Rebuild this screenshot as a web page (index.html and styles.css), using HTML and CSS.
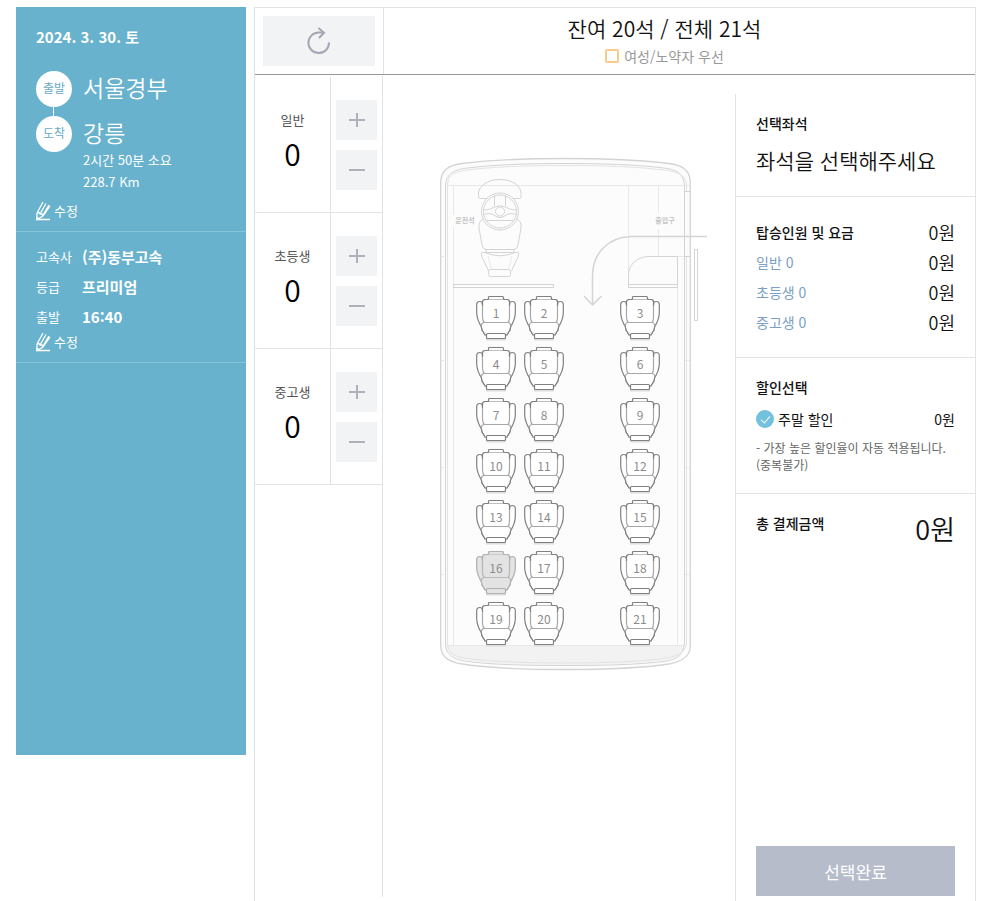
FILE: index.html
```
<!DOCTYPE html>
<html lang="ko">
<head>
  <meta charset="utf-8">
  <meta name="viewport" content="width=device-width, initial-scale=1">
  <title>좌석 선택</title>
  <link rel="stylesheet" href="styles.css">
</head>
<body>

  <!-- shared icons -->
  <svg class="defs" width="0" height="0" aria-hidden="true">
    <symbol id="seat" viewBox="0 0 40 46">
      <path class="seat-shadow" d="M10 44.500H30"/>
      <path class="seat-arm" d="M6.500 9Q6 6.500 4 6.500Q.7 6.500 .7 9.500V18C1 24 3 28 5.500 32L8 27.500H32L34.500 32C37 28 39 24 39.300 18V9.500Q39.300 6.500 36 6.500Q34 6.500 33.500 9Z"/>
      <path class="seat-back" d="M9.500 4.500H31Q33.500 4.500 33.500 7V22Q33.500 26 32 27.500H8.500Q6.500 26 6.500 22V7Q6.500 4.500 9.500 4.500Z"/>
      <path class="seat-line" d="M6.500 11V7Q6.500 4.500 9.500 4.500H31Q33.500 4.500 33.500 7V11"/>
      <path class="seat-line" d="M12.500 4.500V2.500Q12.500 1.500 13.500 1.500H26.500Q27.500 1.500 27.500 2.500V4.500"/>
      <path class="seat-back" d="M8 27.500H32Q35 28 34.700 31.500L34 35L31 40H9L6 35L5.300 31.500Q5 28 8 27.500Z"/>
      <path class="seat-edge" d="M5.300 31.500L6 35L9.500 40.500M34.700 31.500L34 35L30.500 40.500"/>
      <rect class="seat-line" x="10.500" y="38.500" width="19" height="5" rx="1"/>
    </symbol>
    <symbol id="pencil" viewBox="0 0 16 20">
      <path d="M1 12L7 1M4 13L10 2.500M7 14L13 4M1 12L.8 18.500L7 15L14 5M1 12L3 11.500L4 13L6 13L7 15M.8 18.500H14" fill="none" stroke="#fff" stroke-width="1.300"/>
      <path d="M.8 15.500L3 17L.8 19Z" fill="#fff"/>
    </symbol>
  </svg>

  <div class="wrap">

    <aside class="trip">
      <section class="trip-route">
        <p class="date">2024. 3. 30. 토</p>
        <dl class="route">
          <dt>출발</dt>
          <dd>서울경부</dd>
          <dt class="to">도착</dt>
          <dd>강릉</dd>
        </dl>
        <p class="route-info">2시간 50분 소요<br>228.7 Km</p>
        <a class="edit" href="#"><svg width="16" height="20" aria-hidden="true"><use href="#pencil"/></svg>수정</a>
      </section>
      <section class="trip-bus">
        <dl class="bus-info">
          <dt>고속사</dt>
          <dd>(주)동부고속</dd>
          <dt>등급</dt>
          <dd>프리미엄</dd>
          <dt>출발</dt>
          <dd>16:40</dd>
        </dl>
        <a class="edit" href="#"><svg width="16" height="20" aria-hidden="true"><use href="#pencil"/></svg>수정</a>
      </section>
    </aside>

    <main class="booking">
      <header class="booking-head">
        <div class="reset-cell">
          <button class="reset" type="button" aria-label="초기화">
            <svg width="24" height="28" viewBox="0 0 24 28" fill="none" stroke="#a3a8b4" stroke-width="2" aria-hidden="true">
              <path d="M22 15.500A10.300 10.300 0 1 1 12 5.500H16.500"/>
              <path d="M11.500 1L17 5.800L12 11"/>
            </svg>
          </button>
        </div>
        <div class="seat-count">
          <h1>잔여 20석 / 전체 21석</h1>
          <p class="legend"><span class="box"></span>여성/노약자 우선</p>
        </div>
      </header>

      <div class="booking-body">

        <div class="people">
          <div class="person">
            <div class="person-count"><span>일반</span><output>0</output></div>
            <div class="person-btns">
              <button class="plus" type="button" aria-label="일반 추가"></button>
              <button class="minus" type="button" aria-label="일반 빼기"></button>
            </div>
          </div>
          <div class="person">
            <div class="person-count"><span>초등생</span><output>0</output></div>
            <div class="person-btns">
              <button class="plus" type="button" aria-label="초등생 추가"></button>
              <button class="minus" type="button" aria-label="초등생 빼기"></button>
            </div>
          </div>
          <div class="person">
            <div class="person-count"><span>중고생</span><output>0</output></div>
            <div class="person-btns">
              <button class="plus" type="button" aria-label="중고생 추가"></button>
              <button class="minus" type="button" aria-label="중고생 빼기"></button>
            </div>
          </div>
        </div>

        <div class="bus-area">
          <div class="bus">
            <svg class="bus-plan" width="268" height="514" viewBox="0 0 268 514" fill="none" stroke="#d4d4d4">
              <!-- body -->
              <path fill="#fcfcfc" stroke-width="1.300" d="M.7 25C1 12 10 8 22 6.500C50 3 90 1.500 125 1.500S200 3 229 6.500C241 8 250 12 250.300 25V489C250 501 240 505 229 507C200 511.500 160 512.500 125 512.500S50 511.500 22 507C10 505 1 501 .7 489Z"/>
              <path fill="#f2f2f2" stroke="none" d="M7 488.500H244C243 498 236 501 227 503C200 507 160 508 125 508S50 507 24 503C15 501 8 498 7 488.500Z"/>
              <path d="M5.500 29C6 17 14 13 24 11.500C52 7.500 90 6.500 125 6.500S199 7.500 227 11.500C238 13 244 18 244.500 29V487C243 498 237 502 227 504C199 508 160 508.500 125 508.500S52 508 24 504C14 502 6 498 5.500 487Z"/>
              <path stroke="#e3e3e3" d="M7.500 28C8 18 14 15 24 13.500C52 9.500 90 8.500 125 8.500S199 9.500 227 13.500C239 15 246 19 246.500 28V487C245 496 237 499 227 501C199 505 160 506 125 506S52 505 24 501C14 499 8 496 7.500 487Z"/>
              <path d="M244 34.500H250.500M244 99.500H250.500"/>
              <path stroke="#fcfcfc" stroke-width="1.500" d="M246.500 35.500V98.500"/>
              <path stroke="#e8e8e8" d="M1 99.500H6M1 203.500H6M1 310.500H6M1 417.500H6M245 203.500H250M245 310.500H250M245 417.500H250M6 28.500H250M13.500 28.500V58M13.500 70V488M237.500 130V488M6 488.500H244M188.500 28.500V118M218.500 28.500V56M218.500 72V99M218.500 99.500H244"/>
              <!-- partitions -->
              <rect x="13.500" y="127.500" width="100" height="3"/>
              <path d="M188.500 130.500V118C188.500 107 198 99.500 209 99.500H237.500V130.500ZM188.500 127.500H237.500"/>
              <!-- driver -->
              <path d="M38.500 40V35C41 26 51 22.500 60 22.500S79 26 81 35V40Q81 41.500 79 41.500H41Q38.500 41.500 38.500 40Z"/>
              <path d="M43 62Q38.500 64 39 71L42 88Q43 92.500 46 92.500H74Q77 92.500 78 88L81 71Q81.500 64 77 62M46 92.500V95.500H74V92.500"/>
              <path d="M45 95.500Q40.500 94.500 41.500 99L48.500 114M75 95.500Q79.500 94.500 78.500 99L71.500 114M45 95.500Q60 102 75 95.500"/>
              <path stroke="#e8e8e8" d="M48 99L51.500 112M72 99L68.500 112"/>
              <rect x="48.500" y="112.500" width="22" height="7" rx="2"/>
              <circle cx="60" cy="54.500" r="18.500" fill="#fcfcfc"/>
              <circle cx="60" cy="54.500" r="16.500"/>
              <circle cx="60" cy="54.500" r="4.500"/>
              <path d="M54.500 38.500V49M65.500 38.500V49M43.500 53Q50 53 54.500 50Q60 47.500 65.500 50Q70 53 76.500 53M43.500 57.500Q50 55.500 54 58Q60 63 66 58Q70 55.500 76.500 57.500M46 63.500H74"/>
              <!-- door and way in -->
              <rect x="254.500" y="92.500" width="3" height="71"/>
              <path stroke-width="1.500" d="M267 79.500H192C168 80 153 96 152.500 118V148M144 139L152.500 148L161.500 139"/>
              <g class="plan-text">
                <text x="25" y="66">운전석</text>
                <text x="225" y="66">출입구</text>
              </g>
            </svg>
            <div class="seats" id="seats"></div>
          </div>
        </div>

        <aside class="summary">
          <section>
            <h2>선택좌석</h2>
            <p class="picked">좌석을 선택해주세요</p>
          </section>
          <section class="fares">
            <div class="row"><h2>탑승인원 및 요금</h2><span class="won">0원</span></div>
            <div class="row"><span class="kind">일반 0</span><span class="won">0원</span></div>
            <div class="row"><span class="kind">초등생 0</span><span class="won">0원</span></div>
            <div class="row"><span class="kind">중고생 0</span><span class="won">0원</span></div>
          </section>
          <section class="discount">
            <h2>할인선택</h2>
            <div class="row">
              <label><input type="checkbox" checked>주말 할인</label>
              <span>0원</span>
            </div>
            <p class="note">- 가장 높은 할인율이 자동 적용됩니다. (중복불가)</p>
          </section>
          <section class="total">
            <h2>총 결제금액</h2>
            <strong>0원</strong>
          </section>
          <button class="done" type="button">선택완료</button>
        </aside>

      </div>
    </main>
  </div>

  <script src="seats.js"></script>
</body>
</html>
```
FILE: styles.css
```
* {
  box-sizing: border-box;
}
body {
  margin: 0;
  padding: 7px 24px 0 16px;
  font-family: "Noto Sans CJK KR", sans-serif;
  font-size: 14px;
  line-height: 20px;
  color: #111;
  background: #fff;
}
h1, h2, p, dl, dd {
  margin: 0;
}
button {
  border: 0;
  padding: 0;
  font-family: inherit;
  cursor: pointer;
}
.defs {
  position: absolute;
}
.wrap {
  display: flex;
  align-items: flex-start;
  gap: 8px;
}

/* trip panel */
.trip {
  flex: 0 0 230px;
  min-height: 748px;
  background: #68b2ce;
  color: #fff;
}
.trip section {
  padding: 0 20px 10px;
  border-bottom: 1px solid #86c4da;
}
.date {
  padding-top: 20px;
  font-size: 15px;
  font-weight: 700;
}
.route {
  display: grid;
  grid-template-columns: 36px 1fr;
  column-gap: 11px;
  row-gap: 9px;
  padding-top: 24px;
}
.route dt {
  position: relative;
  width: 36px;
  height: 36px;
  border-radius: 50%;
  background: #fff;
  color: #68a9c6;
  font-size: 12px;
  line-height: 34px;
  text-align: center;
}
.route .to::before {
  content: "";
  position: absolute;
  left: 17px;
  bottom: 100%;
  width: 1px;
  height: 9px;
  background: #fff;
}
.route dd {
  height: 33px;
  font-size: 23px;
  font-weight: 350;
  line-height: 33px;
}
.route-info {
  margin: -3px 0 8px;
  padding-left: 47px;
  font-size: 13px;
  line-height: 22px;
}
.edit {
  display: flex;
  gap: 2px;
  color: #fff;
  font-size: 13px;
  text-decoration: none;
}
.trip .trip-bus {
  padding-top: 10px;
}
.bus-info {
  display: grid;
  grid-template-columns: 46px 1fr;
  line-height: 30px;
}
.bus-info dt {
  font-size: 13px;
}
.bus-info dd {
  font-size: 15px;
  font-weight: 700;
}

/* booking frame */
.booking {
  flex: 1;
  display: flex;
  flex-direction: column;
  min-height: calc(100vh - 7px);
  border: 1px solid #e3e3e3;
  border-bottom: 0;
}
.booking-head {
  display: flex;
  height: 67px;
  border-bottom: 1px solid #999;
}
.reset-cell {
  flex: 0 0 129px;
  padding: 8px;
  border-right: 1px solid #e3e3e3;
}
.reset {
  display: flex;
  align-items: center;
  justify-content: center;
  width: 100%;
  height: 50px;
  background: #f2f3f5;
}
.seat-count {
  flex: 1;
  padding: 5px 30px 0 0;
  text-align: center;
}
.seat-count h1 {
  font-size: 21px;
  font-weight: 350;
  line-height: 30px;
}
.legend {
  display: flex;
  align-items: center;
  justify-content: center;
  gap: 5px;
  line-height: 26px;
  color: #999;
}
.legend .box {
  width: 14px;
  height: 14px;
  border: 2px solid #f9cc8b;
  border-radius: 2px;
}
.booking-body {
  flex: 1;
  display: flex;
}

/* passenger counts */
.people {
  flex: 0 0 128px;
  padding-top: 2px;
  border-right: 1px solid #e3e3e3;
  margin-bottom: 4px;
}
.person {
  display: flex;
  height: 136px;
  border-bottom: 1px solid #e3e3e3;
}
.person-count {
  flex: 0 0 76px;
  padding-top: 33px;
  border-right: 1px solid #e3e3e3;
  text-align: center;
  color: #555;
  font-size: 13px;
}
.person-count span,
.person-count output {
  display: block;
}
.person-count output {
  font-size: 30px;
  font-weight: 350;
  line-height: 46px;
  color: #000;
}
.person-btns {
  flex: 1;
  padding: 23px 5px 0;
}
.plus,
.minus {
  display: block;
  position: relative;
  width: 100%;
  height: 40px;
  margin-bottom: 10px;
  background: #f2f3f5;
}
.plus::before,
.plus::after,
.minus::before {
  content: "";
  position: absolute;
  inset: 0;
  margin: auto;
  width: 16px;
  height: 2px;
  background: #adb1bc;
}
.plus::after {
  width: 2px;
  height: 14px;
}

/* bus plan */
.bus-area {
  flex: 1;
  display: flex;
  justify-content: center;
  align-items: flex-start;
  padding: 82px 0 0 30px;
}
.bus {
  display: grid;
}
.bus-plan,
.seats {
  grid-area: 1 / 1;
}
.plan-text {
  font-size: 7px;
  font-weight: 700;
  fill: #c4c4c4;
  stroke: none;
  text-anchor: middle;
}
.seats {
  display: grid;
  grid-template-columns: repeat(4, 40px);
  grid-auto-rows: 46px;
  column-gap: 8px;
  row-gap: 5px;
  align-content: start;
  padding: 138px 0 0 36px;
}
.seat {
  --fill: #fff;
  --dark: #808080;
  --light: #a8a8a8;
  display: grid;
  background: none;
  color: #8c8c8c;
  font-size: 12px;
  line-height: 36px;
}
.seat:disabled {
  --fill: #e3e3e3;
  --dark: #b0b0b0;
  --light: #b8b8b8;
  cursor: default;
}
.seat svg,
.seat span {
  grid-area: 1 / 1;
}
.seat:nth-child(3n) {
  grid-column: 4;
}
.seat-arm,
.seat-line {
  fill: var(--fill);
  stroke: var(--dark);
  stroke-width: 1.2;
}
.seat-back {
  fill: var(--fill);
  stroke: var(--light);
  stroke-width: 1.2;
}
.seat-edge {
  fill: none;
  stroke: var(--dark);
  stroke-width: 1.2;
}
.seat-shadow {
  stroke: #ddd;
  stroke-width: 2;
}

/* summary */
.summary {
  flex: 0 0 240px;
  display: flex;
  flex-direction: column;
  margin-top: 19px;
  padding-bottom: 5px;
  border-left: 1px solid #e3e3e3;
}
.summary section {
  padding: 19px 20px 0;
  border-bottom: 1px solid #e3e3e3;
}
.summary h2 {
  font-size: 14px;
  font-weight: 500;
}
.picked {
  padding: 11px 0 20px;
  font-size: 21px;
  font-weight: 350;
  line-height: 32px;
}
.row {
  display: flex;
  align-items: center;
  justify-content: space-between;
}
.summary .fares {
  padding: 20px;
}
.fares .row {
  height: 30px;
}
.kind {
  color: #7ba0c4;
}
.won {
  font-size: 18px;
  font-weight: 350;
}
.summary .discount {
  padding-bottom: 20px;
}
.discount .row {
  padding: 12px 0 10px;
  font-size: 14px;
}
.discount label {
  display: flex;
  align-items: center;
  gap: 4px;
}
.discount input {
  appearance: none;
  position: relative;
  width: 18px;
  height: 18px;
  margin: 0;
  border-radius: 50%;
  background: #d8dbe2;
}
.discount input:checked {
  background: #72c1dd;
}
.discount input:checked::after {
  content: "";
  position: absolute;
  left: 7px;
  top: 4px;
  width: 4px;
  height: 8px;
  border: solid #fff;
  border-width: 0 1px 1px 0;
  transform: rotate(40deg);
}
.note {
  font-size: 12px;
  line-height: 17px;
  color: #666;
}
.summary .total {
  display: flex;
  justify-content: space-between;
  border-bottom: 0;
}
.total strong {
  font-size: 27px;
  font-weight: 350;
  line-height: 32px;
}
.done {
  height: 50px;
  margin: auto 20px 0;
  background: #b7bccb;
  color: #fff;
  font-size: 17px;
}
```
FILE: seats.js
```
var seats = document.getElementById('seats');
var sold = [16];

for (var i = 1; i <= 21; i++) {
  var seat = document.createElement('button');
  seat.type = 'button';
  seat.className = 'seat';
  seat.disabled = sold.indexOf(i) !== -1;
  seat.innerHTML = '<svg width="40" height="46" aria-hidden="true"><use href="#seat"/></svg><span>' + i + '</span>';
  seats.appendChild(seat);
}
```
